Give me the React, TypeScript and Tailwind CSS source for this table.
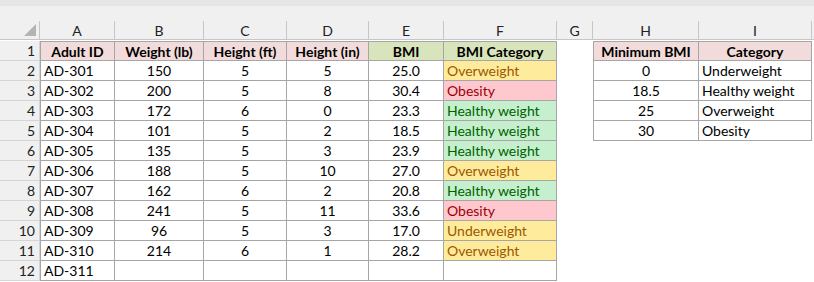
import { FC } from "react";

type Tone = "yellow" | "red" | "green";

interface Row {
  id: string;
  weight?: number;
  ft?: number;
  inch?: number;
  bmi?: string;
  category?: string;
  tone?: Tone;
}

const rows: Row[] = [
  { id: "AD-301", weight: 150, ft: 5, inch: 5, bmi: "25.0", category: "Overweight", tone: "yellow" },
  { id: "AD-302", weight: 200, ft: 5, inch: 8, bmi: "30.4", category: "Obesity", tone: "red" },
  { id: "AD-303", weight: 172, ft: 6, inch: 0, bmi: "23.3", category: "Healthy weight", tone: "green" },
  { id: "AD-304", weight: 101, ft: 5, inch: 2, bmi: "18.5", category: "Healthy weight", tone: "green" },
  { id: "AD-305", weight: 135, ft: 5, inch: 3, bmi: "23.9", category: "Healthy weight", tone: "green" },
  { id: "AD-306", weight: 188, ft: 5, inch: 10, bmi: "27.0", category: "Overweight", tone: "yellow" },
  { id: "AD-307", weight: 162, ft: 6, inch: 2, bmi: "20.8", category: "Healthy weight", tone: "green" },
  { id: "AD-308", weight: 241, ft: 5, inch: 11, bmi: "33.6", category: "Obesity", tone: "red" },
  { id: "AD-309", weight: 96, ft: 5, inch: 3, bmi: "17.0", category: "Underweight", tone: "yellow" },
  { id: "AD-310", weight: 214, ft: 6, inch: 1, bmi: "28.2", category: "Overweight", tone: "yellow" },
  { id: "AD-311" },
];

const lookup = [
  { min: "0", cat: "Underweight" },
  { min: "18.5", cat: "Healthy weight" },
  { min: "25", cat: "Overweight" },
  { min: "30", cat: "Obesity" },
];

const toneClass: Record<Tone, string> = {
  yellow: "bg-[#ffeb9c] text-[#9c5700]",
  red: "bg-[#ffc7ce] text-[#9c0006]",
  green: "bg-[#c6efce] text-[#006100]",
};

const letters = ["A", "B", "C", "D", "E", "F", "G", "H", "I"];

// shared cell borders
const box = "border-r border-b border-[#a6a6a6]";
const plain = "border-r border-b border-transparent";

const App: FC = () => {
  return (
    <div className="w-[814px] h-[282px] overflow-hidden bg-white font-['Lato','Liberation_Sans',sans-serif] text-[14px] text-black">
      <div className="h-[6px] bg-[#e6e6e6]" />
      <div className="h-[15px] bg-[#f0f0f0]" />
      <div className="grid grid-cols-[40px_75px_89px_83px_82px_75px_113px_36px_106px_113px_2px] auto-rows-[20px]">
        {/* column letters */}
        <div className="relative bg-[#f0f0f0] border-r border-b border-[#c6c6c6] h-[19px]">
          <div className="absolute right-[3px] bottom-[3px] w-0 h-0 border-l-[12px] border-l-transparent border-b-[12px] border-b-[#b4b4b4]" />
        </div>
        {letters.map((l) => (
          <div
            key={l}
            className="bg-[#f0f0f0] border-r border-b border-[#c6c6c6] h-[19px] flex items-center justify-center text-[14px] text-[#222]"
          >
            {l}
          </div>
        ))}
        <div className="bg-[#f0f0f0] border-b border-[#c6c6c6] h-[19px]" />

        {/* row 1 */}
        <RowHead n={1} />
        <div className={`${box} border-t border-l bg-[#f2dcdb] font-bold flex items-center justify-center`}>Adult ID</div>
        <div className={`${box} border-t bg-[#f2dcdb] font-bold flex items-center justify-center`}>Weight (lb)</div>
        <div className={`${box} border-t bg-[#f2dcdb] font-bold flex items-center justify-center`}>Height (ft)</div>
        <div className={`${box} border-t bg-[#f2dcdb] font-bold flex items-center justify-center`}>Height (in)</div>
        <div className={`${box} border-t bg-[#d8e4bc] font-bold flex items-center justify-center`}>BMI</div>
        <div className={`${box} border-t bg-[#d8e4bc] font-bold flex items-center justify-center`}>BMI Category</div>
        <div className={plain} />
        <div className={`${box} border-t border-l bg-[#f2dcdb] font-bold flex items-center justify-center`}>Minimum BMI</div>
        <div className={`${box} border-t bg-[#f2dcdb] font-bold flex items-center justify-center`}>Category</div>
        <div />

        {rows.map((r, i) => {
          const look = lookup[i];
          return (
            <div key={r.id} className="contents">
              <RowHead n={i + 2} />
              <div className={`${box} border-l flex items-center pl-[3px]`}>{r.id}</div>
              <div className={`${box} flex items-center justify-center`}>{r.weight}</div>
              <div className={`${box} flex items-center justify-center`}>{r.ft}</div>
              <div className={`${box} flex items-center justify-center`}>{r.inch}</div>
              <div className={`${box} flex items-center justify-center`}>{r.bmi}</div>
              <div className={`${box} flex items-center pl-[3px] ${r.tone ? toneClass[r.tone] : ""}`}>
                {r.category}
              </div>
              <div className={plain} />
              {look ? (
                <>
                  <div className={`${box} border-l flex items-center justify-center`}>{look.min}</div>
                  <div className={`${box} flex items-center pl-[3px]`}>{look.cat}</div>
                </>
              ) : (
                <>
                  <div />
                  <div />
                </>
              )}
              <div />
            </div>
          );
        })}
      </div>
    </div>
  );
};

const RowHead: FC<{ n: number }> = ({ n }) => (
  <div className="bg-[#f0f0f0] border-r border-b border-[#d4d4d4] flex items-center justify-end pr-[4px] text-[14px] text-[#222]">
    {n}
  </div>
);

export default App;
